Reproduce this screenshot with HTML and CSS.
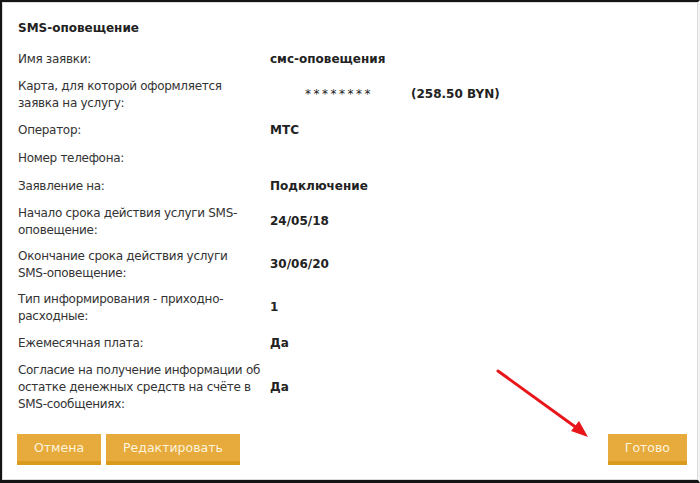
FILE: index.html
```html
<!DOCTYPE html>
<html>
<head>
    <title>SMS-оповещение</title>
    <link rel="stylesheet" href="styles.css">
</head>
<body>
    <div class="frame">
        <div class="panel">
            <h2 class="title">SMS-оповещение</h2>

            <div class="rows">
                <div class="row">
                    <div class="label">Имя заявки:</div>
                    <div class="value">смс-оповещения</div>
                </div>
                <div class="row">
                    <div class="label">Карта, для которой оформляется заявка на услугу:</div>
                    <div class="value"><span class="card-mask">********</span><span class="card-balance">(258.50 BYN)</span></div>
                </div>
                <div class="row">
                    <div class="label">Оператор:</div>
                    <div class="value">МТС</div>
                </div>
                <div class="row">
                    <div class="label">Номер телефона:</div>
                    <div class="value"></div>
                </div>
                <div class="row">
                    <div class="label">Заявление на:</div>
                    <div class="value">Подключение</div>
                </div>
                <div class="row">
                    <div class="label">Начало срока действия услуги SMS-оповещение:</div>
                    <div class="value">24/05/18</div>
                </div>
                <div class="row">
                    <div class="label">Окончание срока действия услуги<br>SMS-оповещение:</div>
                    <div class="value">30/06/20</div>
                </div>
                <div class="row">
                    <div class="label">Тип информирования - приходно-расходные:</div>
                    <div class="value">1</div>
                </div>
                <div class="row">
                    <div class="label">Ежемесячная плата:</div>
                    <div class="value">Да</div>
                </div>
                <div class="row">
                    <div class="label">Согласие на получение информации об остатке денежных средств на счёте в SMS-сообщениях:</div>
                    <div class="value">Да</div>
                </div>
            </div>

            <div class="actions">
                <div class="actions-left">
                    <button class="btn">Отмена</button>
                    <button class="btn">Редактировать</button>
                </div>
                <button class="btn">Готово</button>
            </div>
        </div>

        <!-- стрелка-подсказка к кнопке -->
        <svg class="pointer" width="110" height="80" viewBox="0 0 110 80">
            <line x1="3" y1="3" x2="86" y2="63" stroke="#e8161a" stroke-width="3" stroke-linecap="round"/>
            <polygon points="93,69 76,63 84,53" fill="#e8161a"/>
        </svg>
    </div>
</body>
</html>
```

FILE: styles.css
```css
body {
    margin: 0;
    background-color: #fff;
    color: #333;
    font-family: "DejaVu Sans", Verdana, sans-serif;
    font-size: 12px;
}

.frame {
    position: relative;
    height: 483px;
    box-sizing: border-box;
    border-top: 2px solid #141414;
    border-left: 2px solid #141414;
    border-bottom: 3px solid #141414;
    border-right: 2px solid #f4f4f4;
}

.panel {
    height: 100%;
    box-sizing: border-box;
    border: 1px solid #dcdcdc;
    padding: 17px 10px 0 15px;
}

.title {
    margin: 0;
    font-size: 12px;
    line-height: 17px;
    font-weight: bold;
    color: #222;
}

.rows {
    margin-top: 8px;
}

.row {
    display: grid;
    grid-template-columns: 252px 1fr;
    align-items: center;
    min-height: 28px;
    padding: 4.5px 0;
    box-sizing: border-box;
    line-height: 17px;
}

.label {
    width: 244px;
    letter-spacing: -0.3px;
}

.value {
    font-weight: bold;
    color: #222;
}

.card-mask {
    margin-left: 35px;
    font-weight: normal;
    letter-spacing: 2.5px;
}

.card-balance {
    margin-left: 38px;
}

.actions {
    display: flex;
    justify-content: space-between;
    margin-top: 17px;
    margin-left: -1px;
}

.actions-left {
    display: flex;
    gap: 5px;
}

.btn {
    height: 31px;
    padding: 0 17px;
    background-color: #e7aa3c;
    border: none;
    border-bottom: 4px solid #d99a1e;
    color: #fdf4dc;
    font-family: "DejaVu Sans", Verdana, sans-serif;
    font-size: 12.5px;
    cursor: pointer;
}

.pointer {
    position: absolute;
    left: 493px;
    top: 366px;
}
```
